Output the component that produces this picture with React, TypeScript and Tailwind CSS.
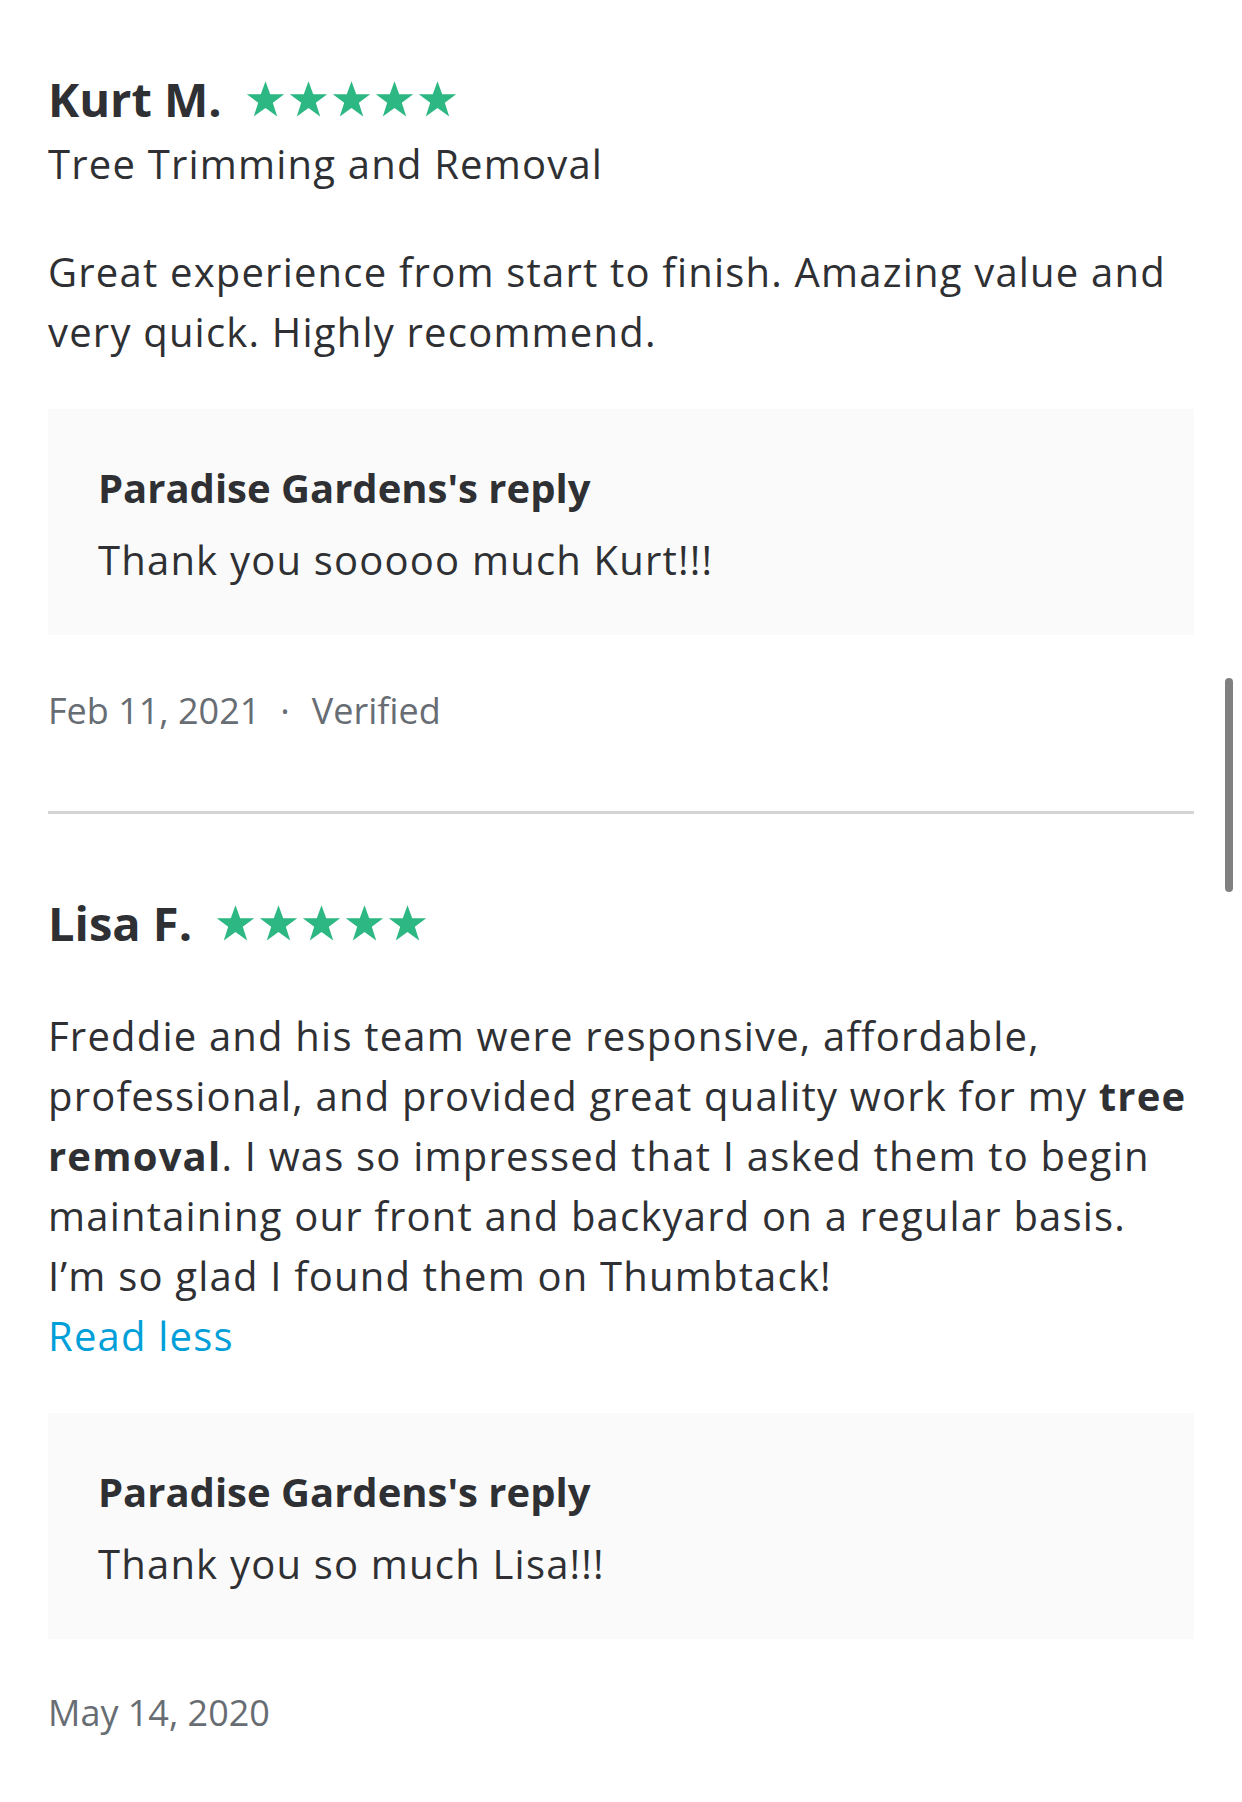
const FONT = "font-['Open_Sans','Noto_Sans',sans-serif]";

function Stars() {
  return (
    <div className="flex items-center gap-[4px]">
      {[0, 1, 2, 3, 4].map((i) => (
        <svg key={i} width="39" height="38" viewBox="0 0 24 23" className="fill-[#2db783]">
          <path d="M12 0.5l2.9 8.1h8.6l-7 5.2 2.7 8.4L12 17l-7.2 5.2 2.7-8.4-7-5.2h8.6z" />
        </svg>
      ))}
    </div>
  );
}

function Reply({ text }: { text: string }) {
  return (
    <div className="mt-[47px] bg-[#fafafa] px-[50px] pb-[45px] pt-[49px]">
      <p className="text-[40px] font-bold leading-[60px] tracking-[0em] text-[#2f3033]">
        Paradise Gardens's reply
      </p>
      <p className="mt-[12px] text-[40px] leading-[60px] tracking-[0.03em] text-[#2f3033]">
        {text}
      </p>
    </div>
  );
}

export default function App() {
  return (
    <div className={`relative min-h-[1802px] bg-white px-12 pt-[70px] ${FONT}`}>
      <section>
        <div className="flex items-center gap-[24px]">
          <h3 className="text-[47px] font-bold leading-[58px] tracking-[0em] text-[#2f3033]">
            Kurt M.
          </h3>
          <Stars />
        </div>
        <p className="mt-[6px] text-[40px] leading-[60px] tracking-[0.03em] text-[#2f3033]">
          Tree Trimming and Removal
        </p>
        <p className="mt-[48px] text-[40px] leading-[60px] tracking-[0.03em] text-[#2f3033]">
          Great experience from start to finish. Amazing value and very quick. Highly
          recommend.
        </p>
        <Reply text="Thank you sooooo much Kurt!!!" />
        <p className="mt-[46px] text-[36px] leading-[60px] text-[#676d73]">
          Feb 11, 2021<span className="ml-[20px] mr-[22px]">·</span>Verified
        </p>
      </section>

      <div className="mt-[70px] h-[3px] bg-[#d3d4d5]" />

      <section className="pt-[80px]">
        <div className="flex items-center gap-[24px]">
          <h3 className="text-[47px] font-bold leading-[58px] tracking-[0em] text-[#2f3033]">
            Lisa F.
          </h3>
          <Stars />
        </div>
        <p className="mt-[54px] text-[40px] leading-[60px] tracking-[0.03em] text-[#2f3033]">
          Freddie and his team were responsive, affordable, professional, and provided
          great quality work for my <b>tree removal</b>. I was so impressed that I asked
          them to begin maintaining our front and backyard on a regular basis. I’m so glad
          I found them on Thumbtack!
        </p>
        <button className="block text-[40px] leading-[60px] tracking-[0.03em] text-[#009fd9]">
          Read less
        </button>
        <Reply text="Thank you so much Lisa!!!" />
        <p className="mt-[44px] text-[36px] leading-[60px] text-[#676d73]">May 14, 2020</p>
      </section>

      <div className="absolute left-[1225px] top-[678px] h-[214px] w-[8px] rounded-full bg-[#808080]" />
    </div>
  );
}
